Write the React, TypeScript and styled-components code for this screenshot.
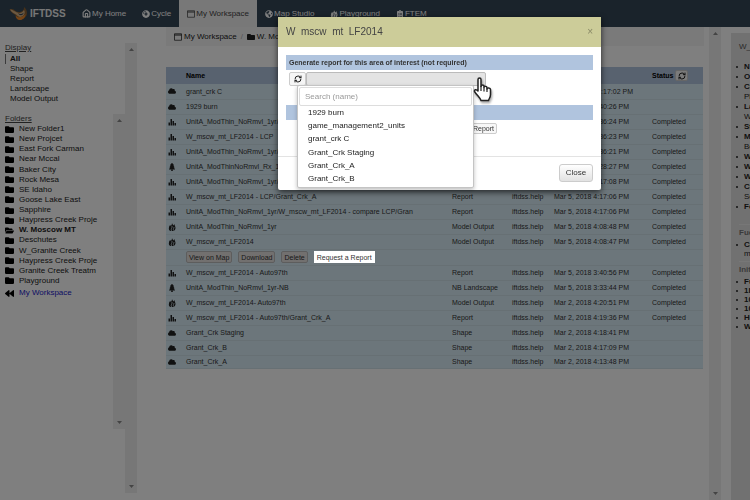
import React from 'react';
import styled, { createGlobalStyle, css } from 'styled-components';
import { FaBackward, FaCloud, FaCompactDisc, FaFolder, FaFolderOpen, FaGlobeAmericas, FaTree, FaClipboardList } from 'react-icons/fa';
import { House, RefreshCw } from 'lucide-react';

const Global = createGlobalStyle`
  *, *::before, *::after { box-sizing: border-box; }
  body { margin: 0; background: #fff; color: #222; font: 8px/10px "Liberation Sans", Arial, sans-serif; }
  button, input { font: inherit; color: inherit; }
  ul { list-style: none; margin: 0; padding: 0; }
  h2, h3, p { margin: 0; font: inherit; }
  svg { display: block; flex: none; }
`;

const Page = styled.div`
  display: flex;
  flex-direction: column;
  height: 100vh;
  overflow: hidden;
`;

const NavBar = styled.header`
  display: flex;
  flex: none;
  height: 27px;
  background: #344656;
  color: #fff;
  padding-left: 9px;
`;

const Brand = styled.a`
  display: flex;
  align-items: center;
  gap: 3px;
  width: 65px;
  color: #eee;
  font-size: 10px;
  font-weight: bold;
  text-decoration: none;
`;

const NavLink = styled.a<{ $active?: boolean }>`
  display: flex;
  align-items: center;
  gap: 1px;
  padding: 0 8px;
  color: inherit;
  white-space: nowrap;
  text-decoration: none;
  ${(p) => p.$active && css`background: #f1f1f1; color: #444;`}
`;

const Columns = styled.div`
  display: flex;
  flex: 1;
  min-height: 0;
`;

const Sidebar = styled.aside`
  display: flex;
  flex: 0 0 137px;
  margin: 16px 29px 7px 0;
`;

const SideContent = styled.nav`
  flex: 1;
  padding-left: 5px;
`;

const SideTitle = styled.h2`
  text-decoration: underline;
  color: #444;
`;

const FilterList = styled.ul`
  padding: 1px 0 10px;
`;

const FilterLink = styled.a<{ $active?: boolean }>`
  display: block;
  border-left: 1px solid ${(p) => (p.$active ? '#777' : 'transparent')};
  padding-left: 4px;
  color: inherit;
  text-decoration: none;
  font-weight: ${(p) => (p.$active ? 'bold' : 'normal')};
`;

const FolderArea = styled.div`
  display: flex;
  height: 315px;
`;

const FolderColumn = styled.div`
  flex: 1;
`;

const FolderList = styled.ul`
  display: grid;
  height: 162px;
  grid-auto-rows: 1fr;
`;

const FolderLink = styled.a<{ $home?: boolean; $open?: boolean }>`
  display: flex;
  align-items: center;
  gap: 5px;
  color: ${(p) => (p.$home ? '#1a1ac8' : 'inherit')};
  font-weight: ${(p) => (p.$open ? 'bold' : 'normal')};
  margin-top: ${(p) => (p.$home ? '2px' : '0')};
  white-space: nowrap;
  text-decoration: none;
  svg { color: #000; }
`;

const Track = styled.div`
  display: flex;
  flex: 0 0 12px;
  flex-direction: column;
  justify-content: space-between;
  align-items: center;
  padding: 5px 0;
  background: #efefef;
  color: #888;
`;

const Main = styled.main`
  flex: 1;
  min-width: 0;
`;

const Breadcrumb = styled.nav`
  display: flex;
  align-items: center;
  gap: 2px;
  height: 19px;
  padding-left: 8px;
  background: #f5f5f5;
  white-space: nowrap;
  a { color: inherit; text-decoration: none; }
`;

const Slash = styled.span`
  width: 6px;
  text-align: center;
  color: #aaa;
`;

const Files = styled.table`
  width: calc(100% - 1px);
  margin-top: 21px;
  table-layout: fixed;
  border-collapse: collapse;
  font-size: 7px;
  line-height: 9px;
  white-space: nowrap;
  color: #333;
`;

const HeadCell = styled.th<{ $w?: number }>`
  width: ${(p) => (p.$w ? `${p.$w}px` : 'auto')};
  height: 17px;
  padding: 0;
  background: #b0c4de;
  color: #000;
  text-align: left;
`;

const StatusHead = styled.div`
  display: flex;
  align-items: center;
  gap: 2px;
`;

const IconButton = styled.button<{ $wide?: boolean }>`
  display: flex;
  align-items: center;
  justify-content: center;
  width: ${(p) => (p.$wide ? 17 : 13)}px;
  height: ${(p) => (p.$wide ? 14 : 11)}px;
  padding: 0;
  border: 1px solid #ccc;
  border-radius: 2px;
  background: #f6f6f6;
  color: #222;
`;

const Row = styled.tr<{ $h?: number }>`
  height: ${(p) => p.$h ?? 15}px;
  background: #d9edf7;
  border-bottom: 1px solid #cfe0e8;
  td { padding: 0; }
  td:first-child svg { margin-left: 2px; color: #222; }
`;

const Actions = styled.div`
  display: flex;
  align-items: center;
  gap: 6px;
`;

const SmallButton = styled.button<{ $spot?: boolean }>`
  height: 12px;
  padding: 0 2px;
  border: 1px solid #bbb;
  border-radius: 2px;
  background: #e4e0df;
  color: #333;
  font-size: 7px;
  line-height: 9px;
  ${(p) => p.$spot && css`position: relative; z-index: 20; background: #fff; border-color: #fff; border-radius: 0;`}
`;

const RightWrap = styled.div`
  display: flex;
  flex: 0 0 46px;
  padding-left: 5px;
`;

const Details = styled.aside`
  flex: 0 0 19px;
  margin: 6px 0 0 10px;
  padding: 9px 0 0 5px;
  overflow: hidden;
  background: #e2e2e2;
  white-space: nowrap;
`;

const DetailTitle = styled.h2`
  padding: 0 0 10px 3px;
  color: #555;
`;

const DetailList = styled.ul<{ $line: number }>`
  line-height: ${(p) => p.$line}px;
`;

const DetailItem = styled.li<{ $plain?: boolean }>`
  display: flex;
  align-items: center;
  gap: 6px;
  font-weight: ${(p) => (p.$plain ? 'normal' : 'bold')};
  &::before {
    content: '';
    flex: none;
    width: 2px;
    height: 2px;
    border-radius: 1px;
    background: ${(p) => (p.$plain ? 'transparent' : '#222')};
  }
`;

const DetailHeading = styled.h3<{ $top: number }>`
  margin: ${(p) => p.$top}px 0 0 3px;
  border-top: 1px solid #eee;
  padding: 3px 0 2px;
  color: #777;
  font-weight: bold;
`;

const Backdrop = styled.div`
  position: fixed;
  inset: 0;
  z-index: 10;
  background: rgba(0, 0, 0, 0.5);
`;

const ModalLayer = styled.div`
  position: fixed;
  inset: 0;
  z-index: 30;
  padding: 17px 149px 0 278px;
  pointer-events: none;
`;

const Modal = styled.section`
  background: #fff;
  border-radius: 2px;
  box-shadow: 0 2px 6px rgba(0, 0, 0, 0.7);
  pointer-events: auto;
`;

const ModalHead = styled.div`
  display: flex;
  align-items: center;
  justify-content: space-between;
  height: 30px;
  padding: 0 8px;
  background: #cccc99;
  color: #444;
  font-size: 10px;
`;

const CloseMark = styled.button`
  height: 20px;
  padding: 0;
  border: 0;
  background: none;
  color: #888866;
  line-height: 10px;
`;

const ModalBody = styled.div`
  display: flex;
  flex-direction: column;
  padding: 8px 8px 22px;
`;

const Band = styled.h3`
  height: 15px;
  padding-left: 3px;
  background: #b0c4de;
  color: #333;
  font-size: 7px;
  font-weight: bold;
  line-height: 15px;
`;

const Picker = styled.div`
  position: relative;
  display: flex;
  height: 14px;
  width: 197px;
  margin: 2px 0 19px 3px;
`;

const PickerBox = styled.button`
  flex: 1;
  border: 1px solid #bbb;
  border-radius: 2px;
  background: #e3e3e3;
`;

const Menu = styled.div`
  position: absolute;
  top: 13px;
  left: 8px;
  width: 177px;
  padding: 1px;
  border: 1px solid #c4c4c4;
  border-radius: 2px;
  background: #fff;
  box-shadow: 0 2px 4px rgba(0, 0, 0, 0.25);
`;

const Search = styled.input`
  display: block;
  width: 100%;
  height: 19px;
  padding: 0 5px;
  border: 1px solid #ddd;
  border-radius: 2px;
  outline: none;
  background: #fff;
  &::placeholder { color: #999; opacity: 1; }
`;

const Options = styled.ul`
  display: grid;
  grid-auto-rows: 1fr;
  align-items: center;
  height: 80px;
  color: #222;
  li { padding-left: 9px; }
`;

const Cursor = styled.svg`
  position: absolute;
  top: 5px;
  right: -6px;
  filter: drop-shadow(1px 2px 1px rgba(0, 0, 0, 0.35));
`;

const ReportButton = styled(SmallButton)`
  margin: 3px 0 0 149px;
  width: 62px;
  height: 11px;
  text-align: right;
  background: #f7f7f7;
  border-color: #ccc;
`;

const ModalFoot = styled.div`
  display: flex;
  justify-content: flex-end;
  padding: 7px 8px 8px;
  border-top: 1px solid #e3e3e3;
`;

const CloseButton = styled.button`
  width: 34px;
  height: 18px;
  padding: 0;
  border: 1px solid #ccc;
  border-radius: 3px;
  background: linear-gradient(#fff, #e2e2e2);
  color: #333;
`;

const Logo = () => (
  <svg width="18" height="14" viewBox="0 0 36 28" aria-hidden="true">
    <path d="M1 5c5-2 9 0 12 3 3 2 8 3 12 1 4-2 5-5 5-9 7 6 8 15 2 21-7 7-18 4-19-5C10 14 5 12 1 5z" fill="#8d6234" />
    <path d="M2 5c6 0 9 4 14 6 5 2 11 1 14-5 3 5 1 10-4 13-5 2-8 0-12-4-5-3-9-5-12-10z" fill="#d6b184" />
    <path d="M13 17c5 6 14 4 20-3 0 8-7 13-13 12-4-1-6-4-7-9z" fill="#e9862a" />
    <path d="M18 12c3 3 8 3 11-1 0 6-8 8-11 1z" fill="#35465a" />
  </svg>
);

const WindowIcon = () => (
  <svg width="8" height="8" viewBox="0 0 16 16" fill="none" stroke="currentColor" aria-hidden="true">
    <path d="M1 1.5h14v13H1z" strokeWidth="1.5" />
    <path d="M1 4h14" strokeWidth="2" />
  </svg>
);

const Bars = () => (
  <svg width="8" height="8" viewBox="0 0 16 16" fill="currentColor" aria-hidden="true">
    <path d="M1 9h3v6H1zM5 2h3v13H5zM9 6h3v9H9zM13 10h3v5h-3z" />
  </svg>
);

const Flames = ({ gap }: { gap: string }) => (
  <svg width="8" height="8" viewBox="0 0 16 16" aria-hidden="true">
    <path d="M8 0c1 3 2 3 3 5l2-3c0 3 2 5 2 8 0 3-2 5-4 6H5c-3-1-4-4-3-7 0-2 1-3 2-5l2 2c1-2 2-3 2-6z" fill="currentColor" />
    <path d="M8 6c1 4-3 5-1 10M12 8c0 3-2 3-1 7" fill="none" stroke={gap} strokeWidth="1.5" />
  </svg>
);

const Arrow = ({ down }: { down?: boolean }) => (
  <svg width="5" height="3" viewBox="0 0 5 3" fill="currentColor" aria-hidden="true">
    <path d={down ? 'M0 0h5L2.5 3z' : 'M0 3h5L2.5 0z'} />
  </svg>
);

const ScrollTrack = () => (
  <Track>
    <Arrow />
    <Arrow down />
  </Track>
);

type Kind = 'shape' | 'report' | 'tree' | 'fire';
const kindIcon: Record<Kind, React.ReactNode> = {
  shape: <FaCloud size={8} />,
  report: <Bars />,
  tree: <FaTree size={8} />,
  fire: <Flames gap="#d9edf7" />,
};

type File = [Kind, string, string, string, string];
const files: File[] = [
  ['shape', 'grant_crk C', 'Shape', 'Mar 12, 2018 4:17:02 PM', ''],
  ['shape', '1929 burn', 'Shape', 'Mar 5, 2018 4:40:26 PM', ''],
  ['report', 'UnitA_ModThin_NoRmvl_1yr/W_mscw_mt_LF2014', 'Report', 'Mar 5, 2018 4:36:24 PM', 'Completed'],
  ['report', 'W_mscw_mt_LF2014 - LCP', 'Report', 'Mar 5, 2018 4:36:23 PM', 'Completed'],
  ['report', 'UnitA_ModThin_NoRmvl_1yr/W_mscw_mt_LF2014', 'Report', 'Mar 5, 2018 4:36:21 PM', 'Completed'],
  ['tree', 'UnitA_ModThinNoRmvl_Rx_1yr', 'NB Landscape', 'Mar 5, 2018 4:28:27 PM', 'Completed'],
  ['report', 'UnitA_ModThin_NoRmvl_1yr/W_mscw_mt_LF2014', 'Report', 'Mar 5, 2018 4:17:08 PM', 'Completed'],
  ['report', 'W_mscw_mt_LF2014 - LCP/Grant_Crk_A', 'Report', 'Mar 5, 2018 4:17:06 PM', 'Completed'],
  ['report', 'UnitA_ModThin_NoRmvl_1yr/W_mscw_mt_LF2014 - compare LCP/Gran', 'Report', 'Mar 5, 2018 4:17:06 PM', 'Completed'],
  ['fire', 'UnitA_ModThin_NoRmvl_1yr', 'Model Output', 'Mar 5, 2018 4:08:48 PM', 'Completed'],
  ['fire', 'W_mscw_mt_LF2014', 'Model Output', 'Mar 5, 2018 4:08:47 PM', 'Completed'],
];
const olderFiles: File[] = [
  ['report', 'W_mscw_mt_LF2014 - Auto97th', 'Report', 'Mar 5, 2018 3:40:56 PM', 'Completed'],
  ['tree', 'UnitA_ModThin_NoRmvl_1yr-NB', 'NB Landscape', 'Mar 5, 2018 3:33:44 PM', 'Completed'],
  ['fire', 'W_mscw_mt_LF2014- Auto97th', 'Model Output', 'Mar 2, 2018 4:20:51 PM', 'Completed'],
  ['report', 'W_mscw_mt_LF2014 - Auto97th/Grant_Crk_A', 'Report', 'Mar 2, 2018 4:19:36 PM', 'Completed'],
  ['shape', 'Grant_Crk Staging', 'Shape', 'Mar 2, 2018 4:18:41 PM', ''],
  ['shape', 'Grant_Crk_B', 'Shape', 'Mar 2, 2018 4:17:09 PM', ''],
  ['shape', 'Grant_Crk_A', 'Shape', 'Mar 2, 2018 4:13:48 PM', ''],
];

const FileRow = ({ file: [kind, name, type, date, status], height }: { file: File; height?: number }) => (
  <Row $h={height}>
    <td>{kindIcon[kind]}</td>
    <td>{name}</td>
    <td>{type}</td>
    <td>iftdss.help</td>
    <td>{date}</td>
    <td>{status}</td>
  </Row>
);

const filters = ['All', 'Shape', 'Report', 'Landscape', 'Model Output'];
const folders = ['New Folder1', 'New Projcet', 'East Fork Carman', 'Near Mccal', 'Baker City', 'Rock Mesa', 'SE Idaho', 'Goose Lake East', 'Sapphire', 'Haypress Creek Proje', 'W. Moscow MT', 'Deschutes', 'W_Granite Creek', 'Haypress Creek Proje', 'Granite Creek Treatm', 'Playground'];
const details: [string, boolean?][] = [['N'], ['O'], ['Cr'], ['Pl', true], ['La'], ['W', true], ['St'], ['M'], ['Be', true], ['W'], ['W'], ['W'], ['Cr'], ['Se', true], ['Fo']];
const options = ['1929 burn', 'game_management2_units', 'grant_crk C', 'Grant_Crk Staging', 'Grant_Crk_A', 'Grant_Crk_B'];

function FileTable() {
  return (
    <Files>
      <thead>
        <tr>
          <HeadCell $w={20} />
          <HeadCell>Name</HeadCell>
          <HeadCell $w={60}>Type</HeadCell>
          <HeadCell $w={42}>Owner</HeadCell>
          <HeadCell $w={98}>Date</HeadCell>
          <HeadCell $w={51}>
            <StatusHead>Status<IconButton aria-label="Refresh status"><RefreshCw size={8} strokeWidth={3} /></IconButton></StatusHead>
          </HeadCell>
        </tr>
      </thead>
      <tbody>
        {files.map((f, i) => <FileRow key={i} file={f} />)}
        <Row $h={16}>
          <td />
          <td colSpan={5}>
            <Actions>
              <SmallButton>View on Map</SmallButton>
              <SmallButton>Download</SmallButton>
              <SmallButton>Delete</SmallButton>
              <SmallButton $spot>Request a Report</SmallButton>
            </Actions>
          </td>
        </Row>
        {olderFiles.map((f, i) => <FileRow key={i} file={f} height={i === 6 ? 13 : 15} />)}
      </tbody>
    </Files>
  );
}

function RightSide() {
  return (
    <RightWrap>
      <ScrollTrack />
      <Details>
        <DetailTitle>W_</DetailTitle>
        <DetailList $line={10}>
          {details.map(([t, plain], i) => <DetailItem key={i} $plain={plain}>{t}</DetailItem>)}
        </DetailList>
        <DetailHeading $top={12}>Fue</DetailHeading>
        <DetailList $line={9}>
          <DetailItem>Ca</DetailItem>
          <DetailItem $plain>m</DetailItem>
        </DetailList>
        <DetailHeading $top={3}>Initi</DetailHeading>
        <DetailList $line={9}>
          {['Fu', '1h', '10', '10', 'He', 'W'].map((t, i) => <DetailItem key={i}>{t}</DetailItem>)}
        </DetailList>
      </Details>
    </RightWrap>
  );
}

function ReportModal() {
  return (
    <ModalLayer>
      <Modal role="dialog" aria-labelledby="report-title">
        <ModalHead>
          <h2 id="report-title">W{'\u00a0\u00a0'}mscw{'\u00a0\u00a0'}mt{'\u00a0\u00a0'}LF2014</h2>
          <CloseMark aria-label="Dismiss">×</CloseMark>
        </ModalHead>
        <ModalBody>
          <Band>Generate report for this area of interest (not required)</Band>
          <Picker>
            <IconButton $wide aria-label="Refresh areas"><RefreshCw size={8} strokeWidth={3} /></IconButton>
            <PickerBox aria-label="Area of interest" aria-haspopup="listbox" />
            <Menu>
              <Search aria-label="Search by name" placeholder="Search (name)" />
              <Options>{options.map((o) => <li key={o}>{o}</li>)}</Options>
            </Menu>
            <Cursor width="19" height="26" viewBox="0 0 19 26" aria-hidden="true">
              <path
                d="M5 2.500c0-2 3-2 3 0v7c0-2 3-2 3 0v1c0-2 3-1.500 3 .5v1c0-1.500 3.500-1.500 3.500 .5v5c0 3-1.500 4-2 6H8c-1-3-4-5-6.500-9-.5-2 2-2.500 3.500-.5z"
                fill="#fff"
                stroke="#222"
                strokeWidth="1.500"
                strokeLinejoin="round"
              />
              <path d="M8 9v5M11 10.500v4M14 11.500v3.500" stroke="#222" strokeWidth="1.200" />
            </Cursor>
          </Picker>
          <Band />
          <ReportButton>Request a Report</ReportButton>
        </ModalBody>
        <ModalFoot><CloseButton>Close</CloseButton></ModalFoot>
      </Modal>
    </ModalLayer>
  );
}

export default function App() {
  return (
    <>
      <Global />
      <Page>
        <NavBar>
          <Brand href="#"><Logo />IFTDSS</Brand>
          <NavLink href="#"><House size={9} strokeWidth={3} />My Home</NavLink>
          <NavLink href="#"><FaCompactDisc size={8} />Cycle</NavLink>
          <NavLink href="#" $active><WindowIcon />My Workspace</NavLink>
          <NavLink href="#"><FaGlobeAmericas size={8} />Map Studio</NavLink>
          <NavLink href="#"><Flames gap="#344656" />Playground</NavLink>
          <NavLink href="#"><FaClipboardList size={8} />FTEM</NavLink>
        </NavBar>
        <Columns>
          <Sidebar>
            <SideContent>
              <SideTitle>Display</SideTitle>
              <FilterList>
                {filters.map((f, i) => <li key={f}><FilterLink href="#" $active={i === 0}>{f}</FilterLink></li>)}
              </FilterList>
              <FolderArea>
                <FolderColumn>
                  <SideTitle>Folders</SideTitle>
                  <FolderList>
                    {folders.map((f, i) => (
                      <li key={i}>
                        <FolderLink href="#" $open={i === 10}>{i === 10 ? <FaFolderOpen size={9} /> : <FaFolder size={9} />}{f}</FolderLink>
                      </li>
                    ))}
                  </FolderList>
                  <FolderLink href="#" $home><FaBackward size={9} />My Workspace</FolderLink>
                </FolderColumn>
                <ScrollTrack />
              </FolderArea>
            </SideContent>
            <ScrollTrack />
          </Sidebar>
          <Main>
            <Breadcrumb>
              <WindowIcon />
              <a href="#">My Workspace</a>
              <Slash>/</Slash>
              <FaFolder size={8} />
              <a href="#">W. Moscow MT</a>
            </Breadcrumb>
            <FileTable />
          </Main>
          <RightSide />
        </Columns>
      </Page>
      <Backdrop />
      <ReportModal />
    </>
  );
}
